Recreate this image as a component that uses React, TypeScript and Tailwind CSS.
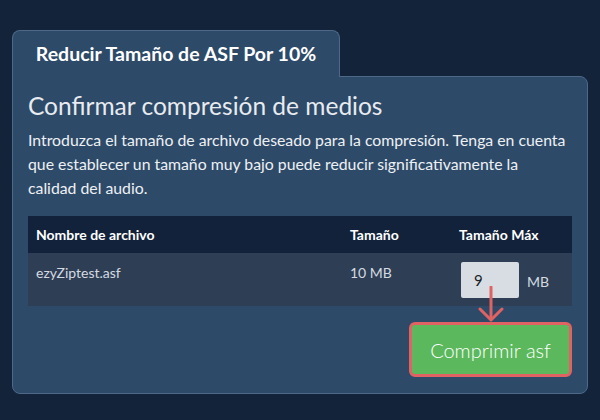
export default function App() {
  return (
    <div
      className="w-[600px] h-[420px] bg-[#12233a] pt-[30px] px-[12px]"
      style={{ fontFamily: "Lato, 'Open Sans', sans-serif" }}
    >
      {/* tab */}
      <div className="relative z-10 -mb-px w-[328px] h-[47px] bg-[#2d4a69] border border-b-0 border-[#4d6888] rounded-t-[8px] flex items-center justify-center">
        <span className="text-[19.5px] font-bold text-white">Reducir Tamaño de ASF Por 10%</span>
      </div>

      {/* panel */}
      <div className="relative w-[576px] h-[318px] bg-[#2d4a69] border border-[#4d6888] rounded-tr-[8px] rounded-b-[8px] px-[15px] pt-[14px]">
        <h2 className="text-[24.5px] leading-[30px] text-[#e8ebef]">Confirmar compresión de medios</h2>
        <p className="mt-[7px] w-[539px] text-[15.8px] leading-[24px] text-[#eef1f4]">
          Introduzca el tamaño de archivo deseado para la compresión. Tenga en cuenta que establecer un tamaño muy bajo puede reducir significativamente la calidad del audio.
        </p>

        <table className="mt-[16px] w-[544px] text-[14px] border-collapse">
          <thead>
            <tr className="bg-[#11223a] h-[37px] text-white text-left">
              <th className="pl-[8px] font-bold">Nombre de archivo</th>
              <th className="w-[109px] pl-0 font-bold">Tamaño</th>
              <th className="w-[113px] pl-0 font-bold">Tamaño Máx</th>
            </tr>
          </thead>
          <tbody>
            <tr className="bg-[#2e3f55] h-[53px] text-[#d5dae1] align-top">
              <td className="pl-[8px] pt-[9px]">ezyZiptest.asf</td>
              <td className="pt-[9px]">10 MB</td>
              <td className="pt-[9px] pl-[2px]">
                <div className="flex items-center gap-[8px]">
                  <div className="w-[58px] h-[36px] rounded-[2px] bg-[#d8dde4] pl-[13px] pt-[8px] text-[#1a1f26] text-[15px] leading-[20px]">9</div>
                  <span className="text-[14px] mt-[2px]">MB</span>
                </div>
              </td>
            </tr>
          </tbody>
        </table>

        <div className="flex justify-end mt-[16px]">
          <button className="w-[163px] h-[55px] rounded-[6px] border-[3px] border-[#e06262] bg-[#5cb85c] text-white text-[20px] font-light">
            Comprimir asf
          </button>
        </div>

        {/* arrow */}
        <svg className="absolute left-[463px] top-[209px]" width="30" height="36" viewBox="0 0 30 36" fill="none">
          <path d="M15 1 V33" stroke="#e06262" strokeWidth="3" strokeLinecap="round" />
          <path d="M4 23 L15 34 L26 23" stroke="#e06262" strokeWidth="3" strokeLinecap="round" strokeLinejoin="round" />
        </svg>
      </div>
    </div>
  );
}
